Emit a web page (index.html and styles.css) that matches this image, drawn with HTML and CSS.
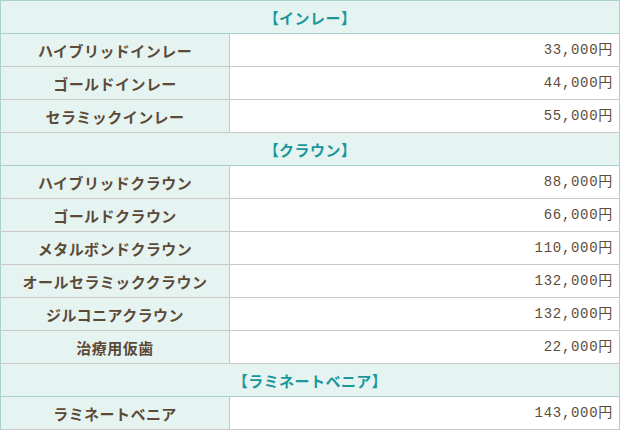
FILE: index.html
```html
<!DOCTYPE html>
<html lang="ja">
<head>
<meta charset="utf-8">
<link rel="stylesheet" href="styles.css">
</head>
<body>
<div class="wrap">
<table class="price">
  <colgroup><col class="col-name"><col class="col-val"></colgroup>
  <tr><th class="cat" colspan="2">【インレー】</th></tr>
  <tr><th class="name">ハイブリッドインレー</th><td class="val">33,000円</td></tr>
  <tr><th class="name">ゴールドインレー</th><td class="val">44,000円</td></tr>
  <tr><th class="name">セラミックインレー</th><td class="val">55,000円</td></tr>
  <tr><th class="cat" colspan="2">【クラウン】</th></tr>
  <tr><th class="name">ハイブリッドクラウン</th><td class="val">88,000円</td></tr>
  <tr><th class="name">ゴールドクラウン</th><td class="val">66,000円</td></tr>
  <tr><th class="name">メタルボンドクラウン</th><td class="val">110,000円</td></tr>
  <tr><th class="name">オールセラミッククラウン</th><td class="val">132,000円</td></tr>
  <tr><th class="name">ジルコニアクラウン</th><td class="val">132,000円</td></tr>
  <tr><th class="name">治療用仮歯</th><td class="val">22,000円</td></tr>
  <tr><th class="cat" colspan="2">【ラミネートベニア】</th></tr>
  <tr><th class="name">ラミネートベニア</th><td class="val">143,000円</td></tr>
</table>
</div>
</body>
</html>
```
FILE: styles.css
```css
html, body {
  margin: 0;
  padding: 0;
  background: #ffffff;
}
.wrap {
  width: 620px;
  overflow: hidden;
}
.price {
  width: 100%;
  border-collapse: collapse;
  border: 1px solid #a9cfcf;
  font-family: "Noto Sans CJK JP", "Noto Sans", sans-serif;
  font-size: 15px;
  letter-spacing: 0.03em;
  table-layout: fixed;
}
.col-name {
  width: 229px;
}
.price th, .price td {
  height: 32px;
  padding: 0;
  line-height: 1;
}
.price .cat {
  background: #e6f4f1;
  color: #1a979c;
  font-weight: bold;
  text-align: center;
  border-top: 1px solid #a9cfcf;
  border-bottom: 1px solid #a9cfcf;
}
.price .name {
  background: #e6f4f1;
  color: #5b4a38;
  font-weight: bold;
  text-align: center;
  border-right: 1px solid #c8c8c8;
  border-bottom: 1px solid #c8c8c8;
}
.price .val {
  background: #ffffff;
  color: #5d4c3c;
  font-family: "Liberation Mono", "Noto Sans CJK JP", monospace;
  font-size: 14px;
  letter-spacing: 0.05em;
  font-weight: normal;
  text-align: right;
  padding-right: 6px;
  border-bottom: 1px solid #c8c8c8;
  border-right: 1px solid #a9cfcf;
}
```
